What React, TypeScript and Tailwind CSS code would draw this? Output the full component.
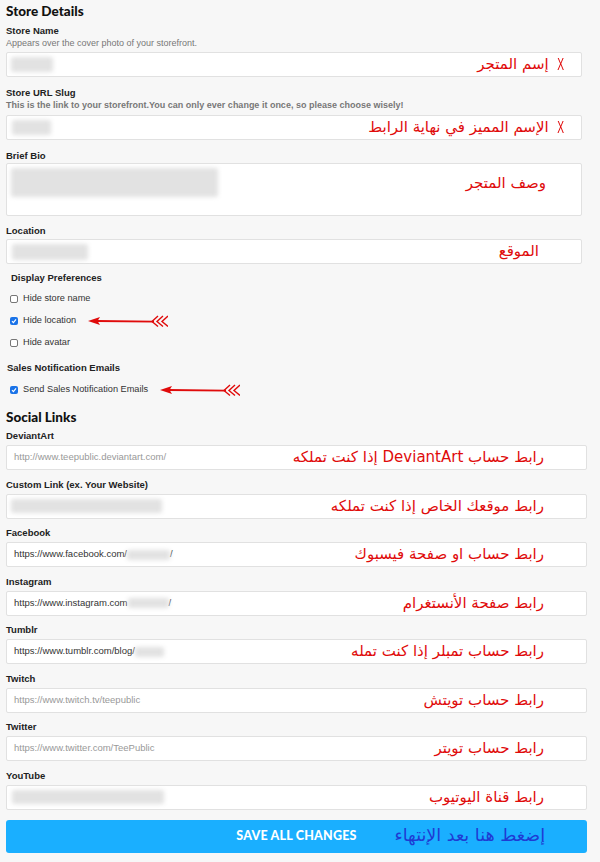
import React from "react";

const sans = { fontFamily: '"Liberation Sans", Arial, sans-serif' };
const arabic = { fontFamily: '"DejaVu Sans", "Noto Sans", sans-serif' };
const heading = { fontFamily: 'Lato, "DejaVu Sans", sans-serif' };

function Blur({ className }: { className: string }) {
  return <span className={`inline-block rounded-[2px] bg-[#e2e2e2] blur-[2px] ${className}`} />;
}

function Note({ text, x }: { text: string; x?: boolean }) {
  return (
    <div className="pointer-events-none absolute inset-y-0 right-0 flex items-center gap-[12px]" dir="rtl">
      {x && <span className="text-[17px] leading-none text-[#e00b0b] scale-x-[0.6] mr-[15px]" style={sans}>X</span>}
      <span className={`text-[15px] leading-none text-[#e00b0b] whitespace-nowrap ${x ? "-mr-[6px]" : "mr-[42px]"}`} style={arabic}>
        {text}
      </span>
    </div>
  );
}

function Box({ children, wide, note, x }: { children?: React.ReactNode; wide?: boolean; note: string; x?: boolean }) {
  return (
    <div
      className={`relative flex h-[25px] items-center rounded-[2px] border border-[#e1e1e1] bg-white px-[7px] text-[9.5px] ${wide ? "w-[581px]" : "w-[576px]"}`}
    >
      {children}
      <Note text={note} x={x} />
    </div>
  );
}

function Arrow() {
  return (
    <svg width="80" height="14" viewBox="0 0 80 14" className="block">
      <path d="M9 7 L66 7.6" stroke="#e00b0b" strokeWidth="1.8" fill="none" />
      <polygon points="0,7 12,3 9.5,7 12,11" fill="#e00b0b" />
      {[64, 69, 74].map((x) => (
        <path key={x} d={`M${x + 6} 2 L${x} 7.5 L${x + 6} 12.5`} stroke="#e00b0b" strokeWidth="1.4" fill="none" />
      ))}
    </svg>
  );
}

function Check({ label, checked, arrow }: { label: string; checked?: boolean; arrow?: boolean }) {
  return (
    <div className="flex h-[12px] items-center">
      {checked ? (
        <span className="flex h-[8px] w-[8px] items-center justify-center rounded-[2px] bg-[#1a73e8]">
          <svg width="6" height="6" viewBox="0 0 6 6">
            <path d="M1 3.2 L2.4 4.6 L5 1.4" stroke="#fff" strokeWidth="1.2" fill="none" />
          </svg>
        </span>
      ) : (
        <span className="h-[8px] w-[8px] rounded-[2px] border border-[#767676] bg-white" />
      )}
      <span className="ml-[5px] text-[9.2px] text-[#333]">{label}</span>
      {arrow && <span className="ml-[12px]"><Arrow /></span>}
    </div>
  );
}

function Label({ children }: { children: React.ReactNode }) {
  return <div className="h-[12px] text-[9.5px] font-bold leading-[12px] text-[#222]">{children}</div>;
}

const social = [
  { label: "DeviantArt", note: "رابط حساب DeviantArt إذا كنت تملكه", body: <span className="text-[#999]">http://www.teepublic.deviantart.com/</span> },
  { label: "Custom Link (ex. Your Website)", note: "رابط موقعك الخاص إذا كنت تملكه", body: <Blur className="-ml-[3px] h-[14px] w-[151px]" /> },
  {
    label: "Facebook",
    note: "رابط حساب او صفحة فيسبوك",
    body: (
      <span className="flex items-center text-[#333]">
        https://www.facebook.com/<Blur className="h-[10px] w-[43px]" />/
      </span>
    ),
  },
  {
    label: "Instagram",
    note: "رابط صفحة الأنستغرام",
    body: (
      <span className="flex items-center text-[#333]">
        https://www.instagram.com<Blur className="h-[10px] w-[41px]" />/
      </span>
    ),
  },
  {
    label: "Tumblr",
    note: "رابط حساب تمبلر إذا كنت تمله",
    body: (
      <span className="flex items-center text-[#333]">
        https://www.tumblr.com/blog/<Blur className="h-[10px] w-[29px]" />
      </span>
    ),
  },
  { label: "Twitch", note: "رابط حساب تويتش", body: <span className="text-[#999]">https://www.twitch.tv/teepublic</span> },
  { label: "Twitter", note: "رابط حساب تويتر", body: <span className="text-[#999]">https://www.twitter.com/TeePublic</span> },
  { label: "YouTube", note: "رابط قناة اليوتيوب", body: <Blur className="-ml-[2px] h-[14px] w-[152px]" /> },
];

export default function App() {
  return (
    <div className="min-h-[862px] w-[600px] bg-[#f7f7f7] pl-[6px] pt-[3px] text-[#222]" style={sans}>
      {/* Store details */}
      <h1 className="h-[16px] text-[13.5px] font-black leading-[16px] text-[#111]" style={heading}>Store Details</h1>

      <div className="mt-[5.5px]">
        <Label>Store Name</Label>
        <div className="mt-[1px] h-[11px] text-[9px] leading-[11px] text-[#777]">Appears over the cover photo of your storefront.</div>
        <div className="mt-[3.5px]">
          <Box note="إسم المتجر" x>
            <Blur className="-ml-[3px] h-[15px] w-[42px]" />
          </Box>
        </div>
      </div>

      <div className="mt-[9.5px]">
        <Label>Store URL Slug</Label>
        <div className="mt-[1px] h-[11px] text-[9px] font-bold leading-[11px] text-[#777]">
          This is the link to your storefront.You can only ever change it once, so please choose wisely!
        </div>
        <div className="mt-[4.5px]">
          <Box note="الإسم المميز في نهاية الرابط" x>
            <Blur className="-ml-[2px] h-[15px] w-[39px]" />
          </Box>
        </div>
      </div>

      <div className="mt-[9.5px]">
        <Label>Brief Bio</Label>
        <div className="relative mt-[1.5px] h-[53px] w-[576px] rounded-[2px] border border-[#e1e1e1] bg-white pl-[4px] pt-[4px]">
          <Blur className="h-[29px] w-[207px]" />
          <div className="pointer-events-none absolute right-[35px] top-[12px] text-[15px] leading-none text-[#e00b0b]" dir="rtl" style={arabic}>
            وصف المتجر
          </div>
        </div>
      </div>

      <div className="mt-[8.5px]">
        <Label>Location</Label>
        <div className="mt-[2.5px]">
          <Box note="الموقع">
            <Blur className="-ml-[2px] h-[16px] w-[76px]" />
          </Box>
        </div>
      </div>

      {/* Preferences */}
      <div className="ml-[5px] mt-[7.5px]">
        <Label>Display Preferences</Label>
      </div>
      <div className="ml-[4px] mt-[9px] flex flex-col gap-[10px]">
        <Check label="Hide store name" />
        <Check label="Hide location" checked arrow />
        <Check label="Hide avatar" />
      </div>

      <div className="ml-[1px] mt-[13.5px]">
        <Label>Sales Notification Emails</Label>
      </div>
      <div className="ml-[4px] mt-[10px]">
        <Check label="Send Sales Notification Emails" checked arrow />
      </div>

      {/* Social */}
      <h2 className="mt-[12.5px] h-[16px] text-[13.5px] font-black leading-[16px] text-[#111]" style={heading}>Social Links</h2>

      <div className="mt-[5.5px] flex flex-col gap-[8.5px]">
        {social.map((s) => (
          <div key={s.label}>
            <Label>{s.label}</Label>
            <div className="mt-[3px]">
              <Box wide note={s.note}>{s.body}</Box>
            </div>
          </div>
        ))}
      </div>

      <button className="relative mt-[10px] flex h-[33px] w-[581px] items-center justify-center rounded-[3px] bg-[#1aafff] text-white">
        <span className="text-[12.5px] font-black tracking-[0.2px]" style={heading}>SAVE ALL CHANGES</span>
        <span className="absolute right-[42px] top-1/2 -translate-y-1/2 text-[17.5px] leading-none text-[#1f3bd3]" dir="rtl" style={arabic}>
          إضغط هنا بعد الإنتهاء
        </span>
      </button>
    </div>
  );
}
